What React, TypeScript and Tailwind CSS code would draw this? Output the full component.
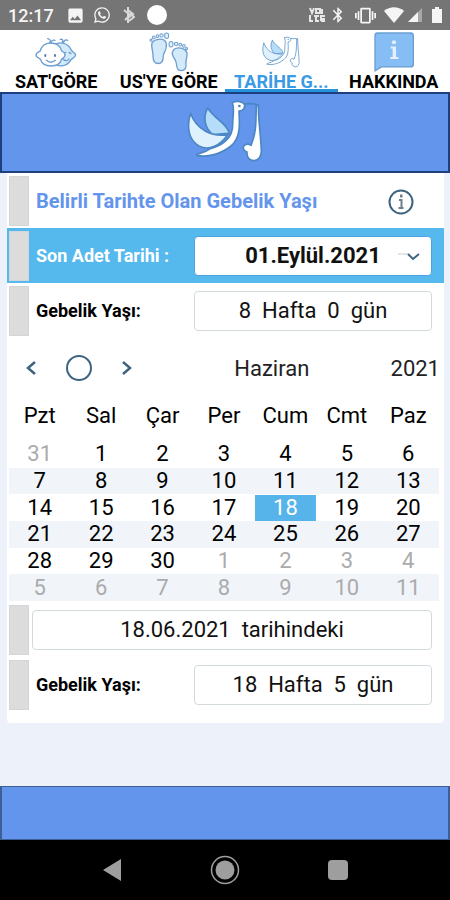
import React, { useState } from 'react';
import { FaWhatsapp } from 'react-icons/fa';
import { MdImage, MdBluetooth, MdVibration } from 'react-icons/md';

const WEEKDAYS = ['Pzt', 'Sal', 'Çar', 'Per', 'Cum', 'Cmt', 'Paz'];

// June 2021, Monday first
const WEEKS = [
  [31, 1, 2, 3, 4, 5, 6],
  [7, 8, 9, 10, 11, 12, 13],
  [14, 15, 16, 17, 18, 19, 20],
  [21, 22, 23, 24, 25, 26, 27],
  [28, 29, 30, 1, 2, 3, 4],
  [5, 6, 7, 8, 9, 10, 11],
];

const BabiesIcon = () => (
  <svg viewBox="0 0 126 90" className="w-[42px] h-[30px]" fill="none" stroke="#6f9fcf" strokeWidth="4" strokeLinecap="round" strokeLinejoin="round">
    <path d="M58 24C74 12 100 18 108 38C112 46 122 48 122 54C122 60 112 64 108 68C98 88 72 92 58 80Z" fill="#d3eafb" />
    <path d="M84 50l8-4M102 46l6 4M84 66c6 7 14 6 18 0" />
    <path d="M82 16c4-6 0-10-6-9M86 16c2-7 6-9 12-6" />
    <path d="M46 18C28 18 18 30 16 42C10 45 3 48 3 54C3 60 10 63 16 66C20 80 32 87 48 87C64 87 76 80 80 66C86 63 90 60 90 54C90 48 86 45 80 42C76 26 64 18 46 18Z" fill="#fff" />
    <path d="M44 18c4-6 2-11-6-13M48 17c2-7 7-9 12-7M34 70c8 7 19 7 27 0" />
    <path d="M31 54v3M60 54v3" strokeWidth="6" stroke="#4b82bb" />
  </svg>
);

const FeetIcon = () => (
  <svg viewBox="0 0 118 116" className="w-10 h-10" fill="none" stroke="#6f9fcf" strokeWidth="4" strokeLinejoin="round">
    <path d="M8 40C6 26 20 20 34 20C48 20 54 32 51 44C49 56 42 60 42 72C42 86 38 92 27 92C15 92 12 84 12 72C12 58 9 52 8 40Z" fill="#d3eafb" />
    <path d="M112 68C114 54 102 46 88 46C72 46 66 58 70 68C74 78 81 84 81 94C82 108 85 113 95 113C107 113 110 104 109 94C108 84 111 78 112 68Z" fill="#d3eafb" />
    <g fill="#e6f3fd" strokeWidth="3">
      <ellipse cx="52" cy="10" rx="6" ry="8" />
      <circle cx="37" cy="9" r="5" />
      <circle cx="25" cy="11" r="4" />
      <circle cx="14" cy="15" r="4" />
      <circle cx="6" cy="23" r="3" />
      <ellipse cx="65" cy="35" rx="6" ry="8" />
      <circle cx="80" cy="34" r="5" />
      <circle cx="92" cy="36" r="4" />
      <circle cx="103" cy="40" r="4" />
      <circle cx="111" cy="48" r="3" />
    </g>
  </svg>
);

const StorkIcon = ({ className, line }: { className: string; line: string }) => (
  <svg viewBox="108 40 240 198" className={className} fill="none" stroke={line} strokeWidth="5" strokeLinejoin="round" strokeLinecap="round">
    <path d="M176 70C160 98 168 132 192 150L240 146C240 122 198 104 176 70Z" fill="#b5dcf8" />
    <path d="M125 86C112 126 118 166 150 184C180 200 214 182 236 150C190 158 142 136 125 86Z" fill="#dff1fc" />
    <path d="M250 54C258 48 278 48 286 58C290 68 284 78 270 79C272 116 276 160 246 184C216 208 176 220 142 212C150 202 166 206 184 192C218 184 252 160 251 120C250 96 258 76 250 54Z" fill="#fff" />
    <path d="M286 58C304 56 320 58 328 62" />
    <path d="M322 62C320 100 324 142 306 182C296 174 282 180 283 190C284 200 290 200 294 202C292 220 304 228 314 228C330 228 338 214 337 196C336 160 328 110 328 62Z" fill="#fff" />
    <circle cx="271" cy="64" r="4" fill={line} stroke="none" />
  </svg>
);

const AboutIcon = () => (
  <svg viewBox="0 0 118 116" className="w-10 h-10">
    <path d="M10 2H108Q116 2 116 10V94Q116 102 108 102H22L3 114V10Q3 2 10 2Z" fill="#86bdf5" stroke="#6b9ed2" strokeWidth="4" strokeLinejoin="round" />
    <g fill="#e4f1fd">
      <circle cx="59" cy="29" r="6" />
      <path d="M49 42H65V73H72V79H48V73H55V48H49Z" />
    </g>
  </svg>
);

const tabs = [
  { id: 'sat', label: "SAT'GÖRE", icon: <BabiesIcon /> },
  { id: 'us', label: "US'YE GÖRE", icon: <FeetIcon /> },
  { id: 'tarih', label: 'TARİHE G...', icon: <StorkIcon className="w-10 h-[34px]" line="#5f97c9" /> },
  { id: 'about', label: 'HAKKINDA', icon: <AboutIcon /> },
];

const StatusBar = () => (
  <div className="flex items-center justify-between h-[30px] px-2 bg-[#757575] text-[#f5f5f5]">
    <div className="flex items-center">
      <span className="w-[58px] pt-[2px] text-[18px] leading-[20px] font-medium">12:17</span>
      <MdImage className="w-[19px] h-[19px] mr-2" />
      <FaWhatsapp className="w-[18px] h-[18px] mr-3" />
      <svg viewBox="0 0 12 18" className="w-3 h-[18px] mr-3" fill="none" stroke="#d8d8d8" strokeWidth="2">
        <path d="M1 4l6 5-5 5M5 1v16M5 4l5 4-5 4M7 7l4 4-5 4" />
      </svg>
      <span className="w-5 h-5 rounded-full bg-white" />
    </div>
    <div className="flex items-center">
      <svg viewBox="0 0 16 16" className="w-4 h-4 mr-1" fill="none" stroke="#e6e6e6" strokeWidth="2">
        <path d="M1 1l2 5 2-5M7 2h4v4H7zM13 2v5M1 8v6h3M7 8v6h3M5 9h5M12 8v6M12 9h4M12 12h4M12 14h4" />
      </svg>
      <MdBluetooth className="w-[18px] h-[18px] mr-2" />
      <MdVibration className="w-[21px] h-[21px] mr-2" />
      <svg viewBox="0 0 20 16" className="w-5 h-4 mr-1" fill="currentColor">
        <path d="M0 4C6-1 14-1 20 4L10 16Z" />
      </svg>
      <svg viewBox="0 0 14 14" className="w-[14px] h-[14px] mr-[10px]">
        <path d="M14 0V14H0Z" fill="#a8a8a8" />
        <path d="M10 4V14H0Z" fill="currentColor" />
      </svg>
      <svg viewBox="0 0 10 16" className="w-[10px] h-4" fill="currentColor">
        <path d="M3 0H7V2H10V16H0V2H3Z" />
      </svg>
    </div>
  </div>
);

const Marker = () => <span className="w-5 h-[50px] shrink-0 bg-[#dcdcdc] border border-[#d3d6d8]" />;

const fieldClass = 'h-10 min-w-0 rounded border bg-white text-center text-[22px] leading-[38px] text-[#111]';

const AgeRow = ({ id, value }: { id: string; value: string }) => (
  <div className="flex items-center h-[55px] pl-[2px] pr-3">
    <Marker />
    <label htmlFor={id} className="w-[158px] ml-[7px] text-lg font-bold">Gebelik Yaşı:</label>
    <input id={id} readOnly value={value} className={`${fieldClass} flex-1 border-[#d3dade]`} />
  </div>
);

export default function App() {
  const [tab, setTab] = useState('tarih');
  const [selected, setSelected] = useState('2-4');

  return (
    <div className="flex flex-col min-h-screen bg-[#edf2fa] text-black font-['Roboto',sans-serif]">
      <StatusBar />

      {/* Tabs */}
      <nav className="grid grid-cols-4 h-[62px] bg-white">
        {tabs.map((t) => (
          <button
            key={t.id}
            onClick={() => setTab(t.id)}
            className={`flex flex-col items-center justify-end border-b-[3px] text-[18px] leading-[14px] font-bold whitespace-nowrap ${
              tab === t.id ? 'border-[#2793dc] text-[#3b9ae6]' : 'border-transparent'
            }`}
          >
            <span className="flex items-center h-[45px] pb-[1px]">{t.icon}</span>
            {t.label}
          </button>
        ))}
      </nav>

      <header className="flex justify-center h-[81px] pt-1 bg-[#6495ed] border-2 border-[#1d3f7d]">
        <StorkIcon className="w-20 h-[66px]" line="#4a87c4" />
      </header>

      <main className="flex-1">
        <section className="ml-[7px] mr-[6px] pb-[11px] rounded-b bg-white">
          <div className="flex items-center h-[55px] pl-[2px] pr-[30px]">
            <Marker />
            <h1 className="flex-1 ml-[7px] text-xl font-bold text-[#6495ed]">Belirli Tarihte Olan Gebelik Yaşı</h1>
            <button aria-label="Bilgi" className="pt-[2px]">
              <svg viewBox="0 0 26 26" className="w-[26px] h-[26px]" fill="none" stroke="#3d6480" strokeWidth="2">
                <circle cx="13" cy="13" r="11.5" />
                <path d="M11 11h2.5v8M10.5 19h5" stroke="#6d7f8b" />
                <path d="M12 7h2.5" strokeWidth="3" stroke="#6d7f8b" />
              </svg>
            </button>
          </div>

          <div className="flex items-center h-[55px] pl-[2px] pr-3 bg-[#56b9ee]">
            <Marker />
            <label htmlFor="lmp" className="w-[158px] ml-[7px] text-lg font-bold text-white">Son Adet Tarihi :</label>
            <div className="relative flex flex-1 min-w-0">
              <select id="lmp" className={`${fieldClass} w-full appearance-none font-bold border-[#4aa3e0]`}>
                <option>01.Eylül.2021</option>
              </select>
              <svg viewBox="0 0 22 10" className="absolute right-3 top-4 w-[22px] h-[10px] pointer-events-none" fill="none">
                <path d="M0 2h10" stroke="#c3cdd4" />
                <path d="M10 2l5 5 6-5" stroke="#3d6480" strokeWidth="2" />
              </svg>
            </div>
          </div>

          <AgeRow id="age-now" value="8  Hafta  0  gün" />

          {/* Month navigation */}
          <div className="flex items-center h-[60px] pl-[18px] pr-1 text-[22px] text-[#222]">
            <button aria-label="Önceki ay">
              <svg viewBox="0 0 12 16" className="w-3 h-4" fill="none" stroke="#3d6480" strokeWidth="2.5">
                <path d="M10 2L3 8l7 6" />
              </svg>
            </button>
            <button aria-label="Bugün" className="w-[26px] h-[26px] mx-[29px] rounded-full border-2 border-[#3d6480]" />
            <button aria-label="Sonraki ay">
              <svg viewBox="0 0 12 16" className="w-3 h-4" fill="none" stroke="#3d6480" strokeWidth="2.5">
                <path d="M2 2l7 6-7 6" />
              </svg>
            </button>
            <span className="flex-1 text-center pl-5">Haziran</span>
            <span>2021</span>
          </div>

          <div className="pl-[2px] pr-[5px]">
            <table className="w-full h-[203px] table-fixed text-[22px] leading-[26px] text-center">
              <thead>
                <tr className="h-[43px]">
                  {WEEKDAYS.map((d) => (
                    <th key={d} scope="col" className="p-0 pb-2 font-normal">{d}</th>
                  ))}
                </tr>
              </thead>
              <tbody>
                {WEEKS.map((week, w) => (
                  <tr key={w} className="even:bg-[#f1f5fa]">
                    {week.map((day, d) => {
                      const outside = (w === 0 && day > 7) || (w > 3 && day < 15);
                      const isSelected = selected === `${w}-${d}`;
                      return (
                        <td key={d} className="p-0">
                          <button
                            onClick={() => setSelected(`${w}-${d}`)}
                            className={`block w-full ${isSelected ? 'bg-[#56b4ea] text-white' : outside ? 'text-[#ababab]' : ''}`}
                          >
                            {day}
                          </button>
                        </td>
                      );
                    })}
                  </tr>
                ))}
              </tbody>
            </table>
          </div>

          <div className="flex items-center h-[55px] mt-[1px] pl-[2px] pr-3">
            <Marker />
            <input aria-label="Seçilen tarih" readOnly value="18.06.2021  tarihindeki" className={`${fieldClass} flex-1 ml-[3px] border-[#d3dade]`} />
          </div>

          <AgeRow id="age-then" value="18  Hafta  5  gün" />
        </section>
      </main>

      <footer className="h-[54px] bg-[#6495ed] border-x-2 border-y border-[#3d5f96]" />

      {/* Android navigation */}
      <div className="flex items-center justify-center gap-[88px] h-[60px] bg-black text-[#9e9e9e]">
        <button aria-label="Geri">
          <svg viewBox="0 0 20 22" className="w-5 h-[22px]" fill="currentColor"><path d="M19 0V22L1 11Z" /></svg>
        </button>
        <button aria-label="Ana ekran">
          <svg viewBox="0 0 30 30" className="w-[30px] h-[30px]" fill="currentColor">
            <circle cx="15" cy="15" r="9.5" />
            <circle cx="15" cy="15" r="13.5" fill="none" stroke="currentColor" strokeWidth="1.5" />
          </svg>
        </button>
        <button aria-label="Son uygulamalar" className="w-5 h-5 rounded-sm bg-[#9e9e9e]" />
      </div>
    </div>
  );
}
